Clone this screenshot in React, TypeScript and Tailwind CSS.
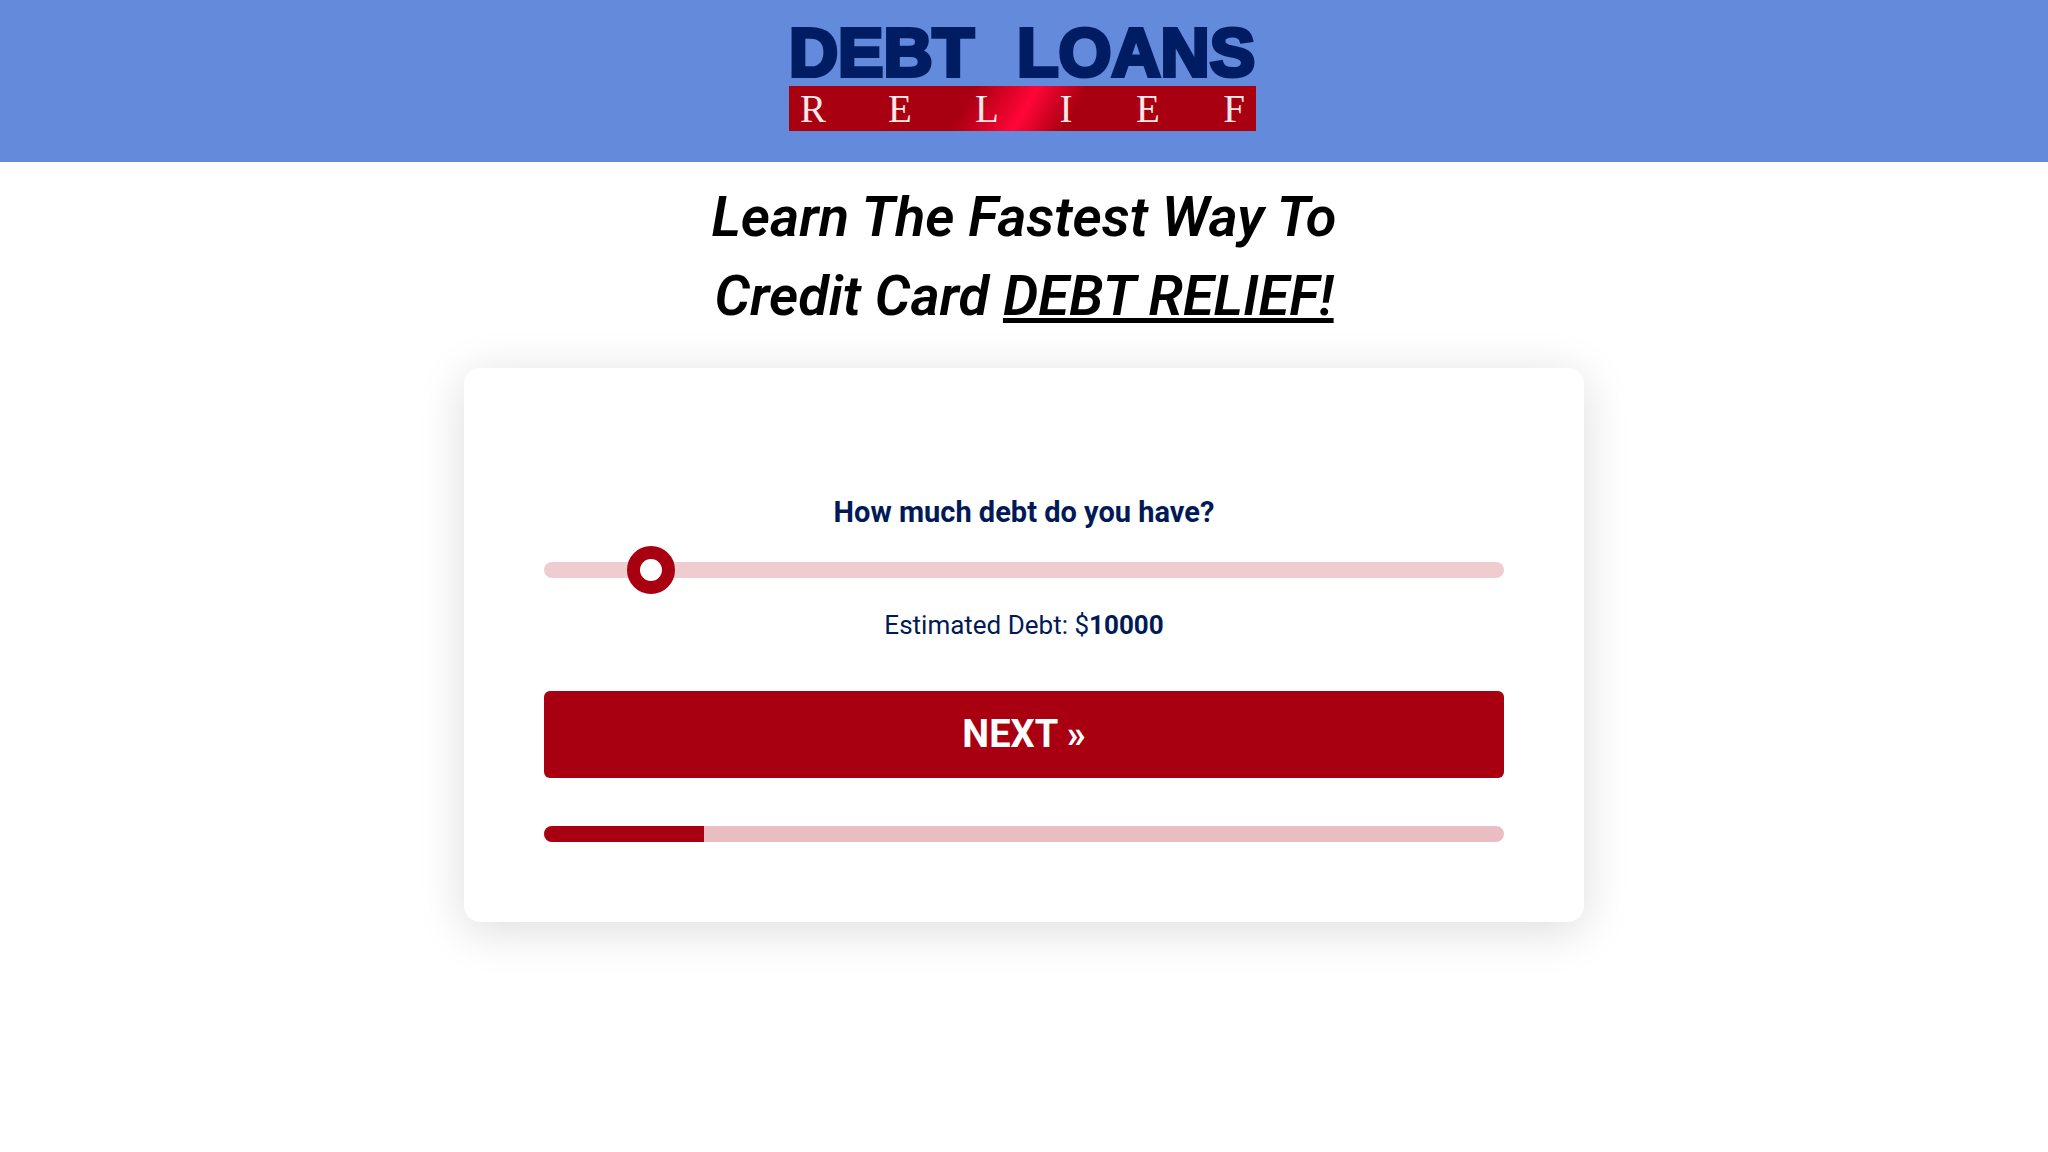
import { useState } from "react";

const ribbonLetters = [
  { letter: "R", x: 24 },
  { letter: "E", x: 111 },
  { letter: "L", x: 198 },
  { letter: "I", x: 277 },
  { letter: "E", x: 359 },
  { letter: "F", x: 445 },
];

function Logo() {
  return (
    <svg width="478" height="118" viewBox="-4 -16 478 118" role="img" aria-label="Debt Loans Relief">
      <defs>
        <linearGradient id="shine" gradientUnits="userSpaceOnUse" x1="188" y1="55" x2="272" y2="103">
          <stop offset="0" stopColor="#a90011" />
          <stop offset="0.46" stopColor="#f00430" />
          <stop offset="0.56" stopColor="#ff0638" />
          <stop offset="1" stopColor="#a90011" />
        </linearGradient>
      </defs>
      <g
        fill="#001c62"
        stroke="#001c62"
        strokeWidth="4"
        fontFamily="'Liberation Sans', Arial, sans-serif"
        fontSize="68"
        fontWeight="700"
      >
        <text x="0" y="47">DEBT</text>
        <text x="466" y="47" textAnchor="end">LOANS</text>
      </g>
      <rect y="57" width="467" height="45" fill="url(#shine)" />
      <g
        fill="#ffe8e8"
        fontFamily="'Liberation Serif', serif"
        fontSize="39"
        textAnchor="middle"
      >
        {ribbonLetters.map(({ letter, x }) => (
          <text key={x} x={x} y="93">
            {letter}
          </text>
        ))}
      </g>
    </svg>
  );
}

export default function App() {
  const [debt, setDebt] = useState(10000);

  return (
    <div className="min-h-screen bg-white font-['Roboto',sans-serif]">
      <header className="flex justify-center bg-[#648adc] pt-[13px] pb-[31px]">
        <a href="#">
          <Logo />
        </a>
      </header>
      <main className="px-4 pt-4 pb-16">
        <h1 className="text-center text-[56px] leading-[79px] font-semibold text-black italic">
          Learn The Fastest Way To
          <br />
          Credit Card <span className="underline">DEBT RELIEF!</span>
        </h1>
        <form
          className="mx-auto mt-8 flex max-w-[1120px] flex-col rounded-2xl bg-white p-20 text-[#001a57] shadow-[0_8px_48px_rgba(0,0,0,0.14)]"
          onSubmit={(e) => e.preventDefault()}
        >
          <label htmlFor="debt" className="mt-11 text-center text-[29px] leading-10 font-bold">
            How much debt do you have?
          </label>
          <input
            id="debt"
            type="range"
            min={1000}
            max={100000}
            step={1000}
            value={debt}
            onChange={(e) => setDebt(Number(e.target.value))}
            className="mt-[30px] h-4 w-full cursor-pointer appearance-none rounded-full bg-[#eeccd0] [&::-webkit-slider-thumb]:size-12 [&::-webkit-slider-thumb]:appearance-none [&::-webkit-slider-thumb]:rounded-full [&::-webkit-slider-thumb]:border-[13px] [&::-webkit-slider-thumb]:border-[#a90011] [&::-webkit-slider-thumb]:bg-white"
          />
          <output htmlFor="debt" className="mt-[27px] text-center text-[26px] leading-10">
            Estimated Debt: $<b>{debt}</b>
          </output>
          <button
            type="submit"
            className="mt-[46px] h-[87px] cursor-pointer rounded-md bg-[#a90011] text-[38px] font-bold text-white"
          >
            NEXT »
          </button>
          <div
            role="progressbar"
            aria-label="Form progress"
            aria-valuenow={17}
            aria-valuemin={0}
            aria-valuemax={100}
            className="mt-12 h-4 overflow-hidden rounded-full bg-[#eabdc3]"
          >
            <div className="h-full w-1/6 bg-[#a90011]" />
          </div>
        </form>
      </main>
    </div>
  );
}
